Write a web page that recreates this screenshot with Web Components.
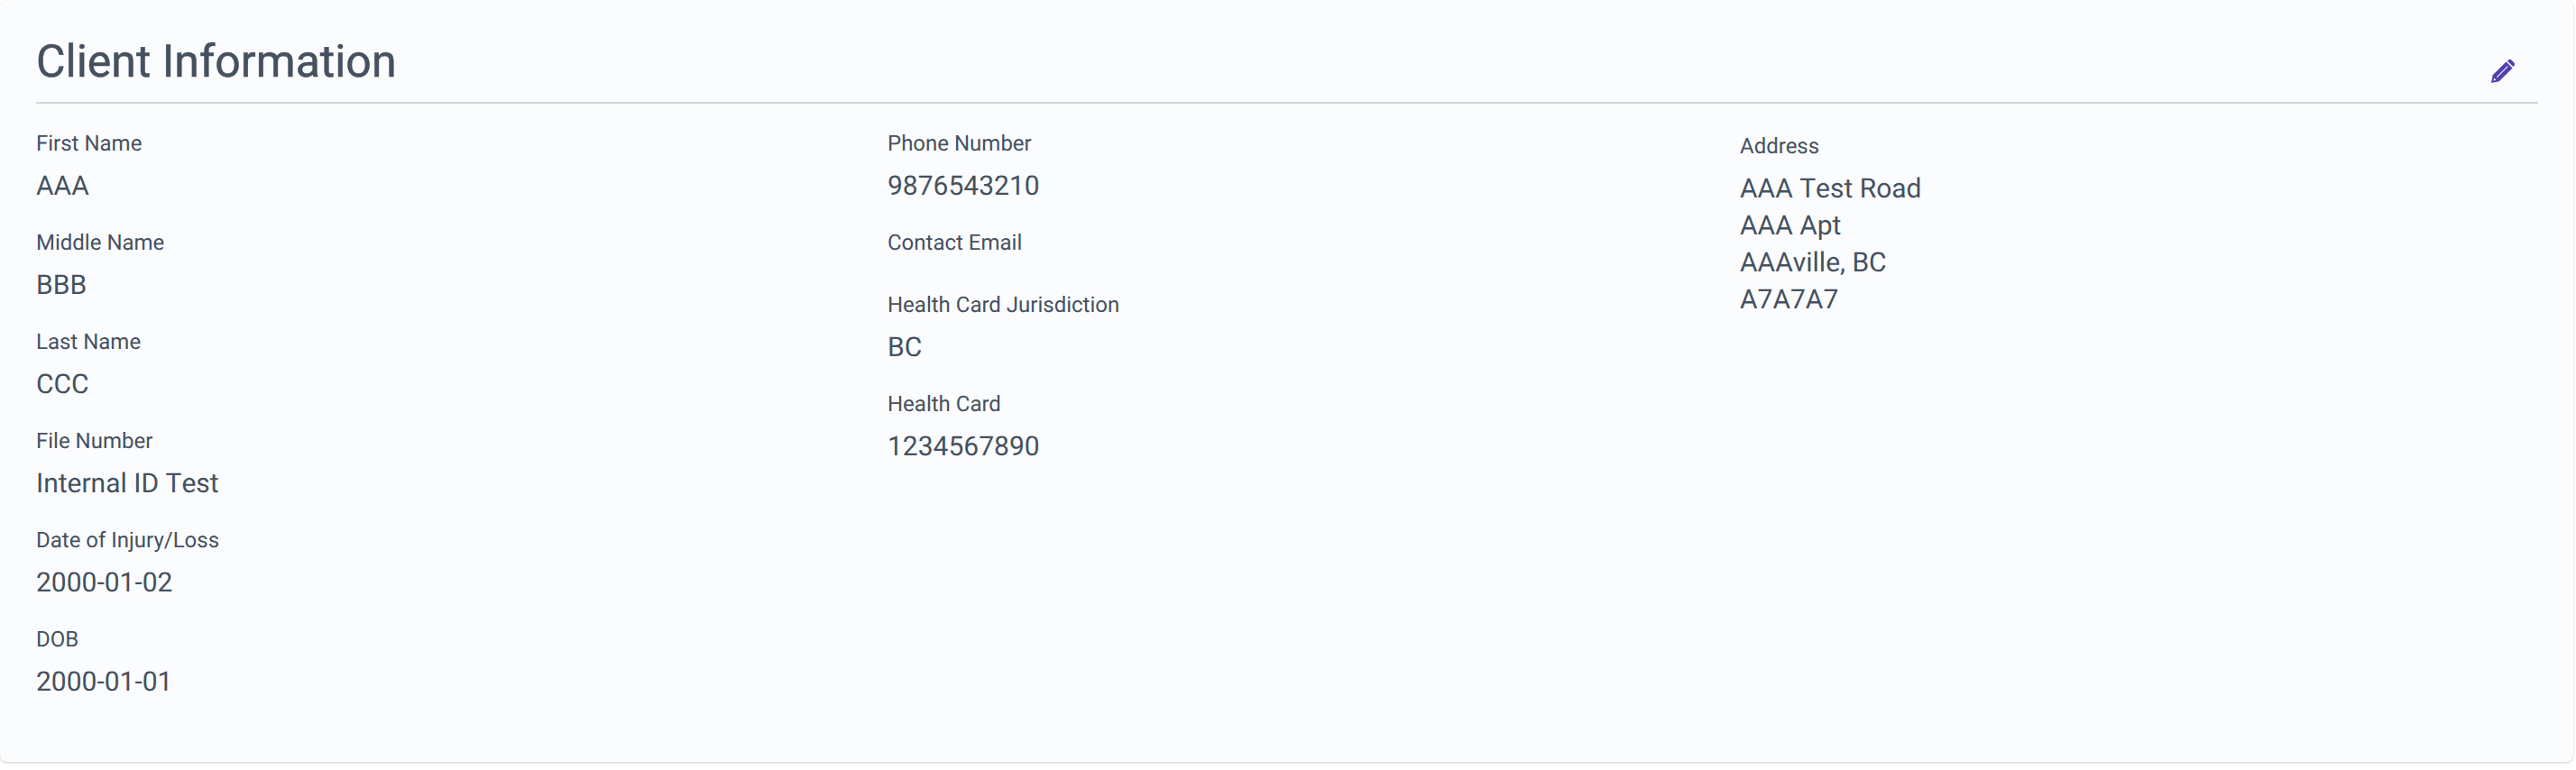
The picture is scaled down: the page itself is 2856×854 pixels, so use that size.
<!DOCTYPE html>
<html>
<head>
<meta charset="utf-8">
<title>Client Information</title>
<style>
  html, body { margin: 0; height: 100%; background: #fff; }
  body { font-family: Roboto, "Liberation Sans", sans-serif; color: #455160; text-rendering: geometricPrecision; }
</style>
</head>
<body>
<client-card heading="Client Information">
  <info-column>
    <info-field label="First Name">AAA</info-field>
    <info-field label="Middle Name">BBB</info-field>
    <info-field label="Last Name">CCC</info-field>
    <info-field label="File Number">Internal ID Test</info-field>
    <info-field label="Date of Injury/Loss">2000-01-02</info-field>
    <info-field label="DOB">2000-01-01</info-field>
  </info-column>
  <info-column>
    <info-field label="Phone Number">9876543210</info-field>
    <info-field label="Contact Email"></info-field>
    <info-field label="Health Card Jurisdiction">BC</info-field>
    <info-field label="Health Card">1234567890</info-field>
  </info-column>
  <info-column class="address">
    <info-field label="Address">AAA Test Road<br>AAA Apt<br>AAAville, BC<br>A7A7A7</info-field>
  </info-column>
</client-card>

<script>
class ClientCard extends HTMLElement {
  static get tagName() {
    return "client-card";
  }

  constructor() {
    super();
    this.shadow = this.attachShadow({ mode: "open" });
    this.shadow.innerHTML = `
      <style>
        :host {
          display: block;
          box-sizing: border-box;
          width: 2853px;
          height: 845px;
          padding: 0 39px 0 40px;
          background: #fbfcfe;
          border-radius: 8px;
          box-shadow: 0 1px 3px rgba(0, 0, 0, 0.2);
        }
        header {
          display: flex;
          justify-content: space-between;
          height: 113px;
          border-bottom: 2px solid #d4d5da;
        }
        h2 {
          margin: 0;
          padding-top: 37px;
          font-size: 50px;
          line-height: 64px;
          font-weight: 400;
          -webkit-text-stroke: 0.5px #455160;
        }
        button {
          border: 0;
          padding: 0;
          margin: 66px 26px 0 0;
          width: 26px;
          height: 26px;
          background: none;
          cursor: pointer;
        }
        svg { display: block; width: 26px; height: 26px; overflow: visible; }
        .columns {
          display: grid;
          grid-template-columns: 944px 945px 1fr;
          padding-top: 26px;
        }
      </style>
      <header>
        <h2></h2>
        <button aria-label="Edit">
          <svg viewBox="0 0 26 26">
            <g transform="rotate(45 13 13)">
              <path fill="#5340ae" d="M8.5 1.5V0a2.5 2.5 0 0 1 2.5-2.5h4A2.5 2.5 0 0 1 17.5 0v1.5z"/>
              <path fill="#5340ae" d="M8 3h10V24L13 31.4 8 24z"/>
              <path fill="#fbfcfe" d="M12.5 5.5h1v17h-1z"/>
              <path fill="#fbfcfe" d="M11.4 25.2h3.2L13 28z"/>
            </g>
          </svg>
        </button>
      </header>
      <div class="columns"><slot></slot></div>
    `;
    this.shadow.querySelector("h2").textContent = this.getAttribute("heading");
  }
}

class InfoColumn extends HTMLElement {
  constructor() {
    super();
    this.shadow = this.attachShadow({ mode: "open" });
    this.shadow.innerHTML = `
      <style>
        :host { display: block; }
        :host(.address) { padding-top: 3px; }
      </style>
      <slot></slot>
    `;
  }
}

class InfoField extends HTMLElement {
  constructor() {
    super();
    this.shadow = this.attachShadow({ mode: "open" });
    this.shadow.innerHTML = `
      <style>
        :host { display: block; padding-bottom: 24px; }
        .label {
          font-size: 24px;
          line-height: 36px;
          margin-bottom: 9px;
        }
        .value {
          font-size: 30px;
          line-height: 41px;
          font-kerning: none;
        }
      </style>
      <div class="label"></div>
      <div class="value"><slot></slot></div>
    `;
    this.shadow.querySelector(".label").textContent = this.getAttribute("label");
    if (!this.textContent.trim()) {
      this.shadow.querySelector(".value").style.display = "none";
    }
  }
}

customElements.define(ClientCard.tagName, ClientCard);
customElements.define("info-column", InfoColumn);
customElements.define("info-field", InfoField);
</script>
</body>
</html>
